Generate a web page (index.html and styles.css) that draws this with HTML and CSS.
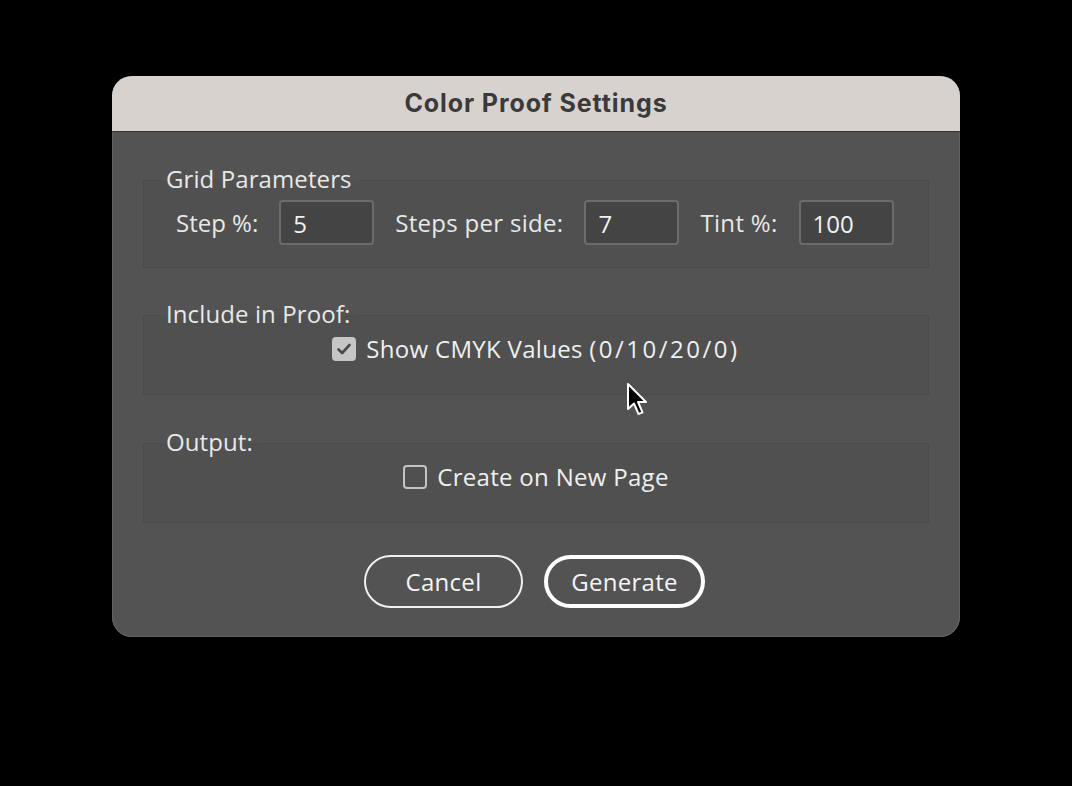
FILE: index.html
```html
<!DOCTYPE html>
<html>
<head>
<meta charset="utf-8">
<link rel="stylesheet" href="styles.css">
</head>
<body>
<div class="dialog">
  <div class="titlebar">Color Proof Settings</div>
  <div class="content">
    <fieldset class="group grid">
      <legend>Grid Parameters</legend>
      <div class="row">
        <span class="label">Step %:</span>
        <span class="input">5</span>
        <span class="label">Steps per side:</span>
        <span class="input">7</span>
        <span class="label">Tint %:</span>
        <span class="input">100</span>
      </div>
    </fieldset>
    <fieldset class="group">
      <legend>Include in Proof:</legend>
      <div class="check-row">
        <span class="box checked">
          <svg width="24" height="24" viewBox="0 0 24 24"><path d="M6.5 12.5 L10.2 16 L17.5 8" fill="none" stroke="#4a4a4a" stroke-width="2.6" stroke-linecap="round" stroke-linejoin="round"/></svg>
        </span>
        <span class="check-label">Show CMYK Values <span class="nums">(0/10/20/0)</span></span>
      </div>
    </fieldset>
    <fieldset class="group last">
      <legend>Output:</legend>
      <div class="check-row">
        <span class="box"></span>
        <span class="check-label">Create on New Page</span>
      </div>
    </fieldset>
    <div class="buttons">
      <button class="btn">Cancel</button>
      <button class="btn primary">Generate</button>
    </div>
  </div>
  <svg class="cursor" width="24" height="36" viewBox="0 0 24 36">
    <path d="M2 2 L2 27 L8 21.5 L12.5 32 L16.5 30.3 L12 20 L20 20 Z" fill="#000" stroke="#fff" stroke-width="2" stroke-linejoin="round"/>
  </svg>
</div>
</body>
</html>
```

FILE: styles.css
```css
html, body {
  margin: 0;
  padding: 0;
  background: #000;
}
body {
  padding: 76px 0 0 112px;
  font-family: "Open Sans", "Noto Sans", sans-serif;
}
.dialog {
  position: relative;
  width: 848px;
  height: 561px;
  box-sizing: border-box;
  background: #535353;
  border-radius: 20px;
  overflow: hidden;
  box-shadow: inset 0 0 0 1px #626262;
}
.titlebar {
  height: 55px;
  background: #d8d2cf;
  border-bottom: 1px solid #353535;
  color: #3a3a3a;
  font-family: "Inter", "Open Sans", sans-serif;
  font-weight: 700;
  font-size: 25px;
  letter-spacing: 0.9px;
  line-height: 55px;
  text-align: center;
}
.content {
  padding: 34px 31px 0 31px;
  display: flex;
  flex-direction: column;
}
.group {
  margin: 0;
  border: 1px solid #4a4a4a;
  background: #505050;
  padding: 0 0 0 32px;
  min-width: 0;
}
legend {
  margin-left: -17px;
  padding: 0 8px 0 7px;
  font-size: 24px;
  line-height: 28px;
  color: #e8e8e8;
  letter-spacing: 0.1px;
  position: relative;
  top: -1px;
}
.grid {
  padding-top: 6px;
  padding-bottom: 22px;
}
.group + .group {
  margin-top: 33px;
}
.group.last {
  margin-top: 34px;
}
.row {
  display: flex;
  align-items: center;
  gap: 21px;
}
.label {
  font-size: 24px;
  color: #e8e8e8;
  letter-spacing: 0.3px;
}
.label:first-child {
  letter-spacing: 0;
}
.input {
  box-sizing: border-box;
  width: 95px;
  height: 45px;
  background: #444444;
  border: 2px solid #6c6c6c;
  border-radius: 4px;
  color: #f2f2f2;
  font-size: 24px;
  line-height: 43px;
  padding-left: 12px;
}
.check-row {
  display: flex;
  align-items: center;
  justify-content: center;
  gap: 10px;
  padding: 6px 32px 31px 0;
}
.box {
  box-sizing: border-box;
  width: 24px;
  height: 24px;
  border: 2px solid #c4c4c4;
  border-radius: 4px;
  display: flex;
  align-items: center;
  justify-content: center;
}
.box.checked {
  background: #c6c6c6;
  border-color: #c6c6c6;
}
.box svg {
  display: block;
  margin: -2px;
}
.check-label {
  font-size: 24px;
  color: #efefef;
  letter-spacing: 0.3px;
  line-height: 28px;
}
.nums {
  letter-spacing: 2.5px;
}
.buttons {
  display: flex;
  justify-content: center;
  gap: 21px;
  margin-top: 32px;
  padding-right: 3px;
}
.btn {
  box-sizing: border-box;
  height: 53px;
  width: 159px;
  border-radius: 27px;
  border: 2px solid #f0f0f0;
  background: transparent;
  color: #f5f5f5;
  font-family: "Open Sans", sans-serif;
  font-size: 24px;
  letter-spacing: 0.3px;
  padding: 0;
}
.btn.primary {
  width: 161px;
  border-width: 4px;
  border-color: #ffffff;
}
.cursor {
  position: absolute;
  left: 514px;
  top: 306px;
}
```
